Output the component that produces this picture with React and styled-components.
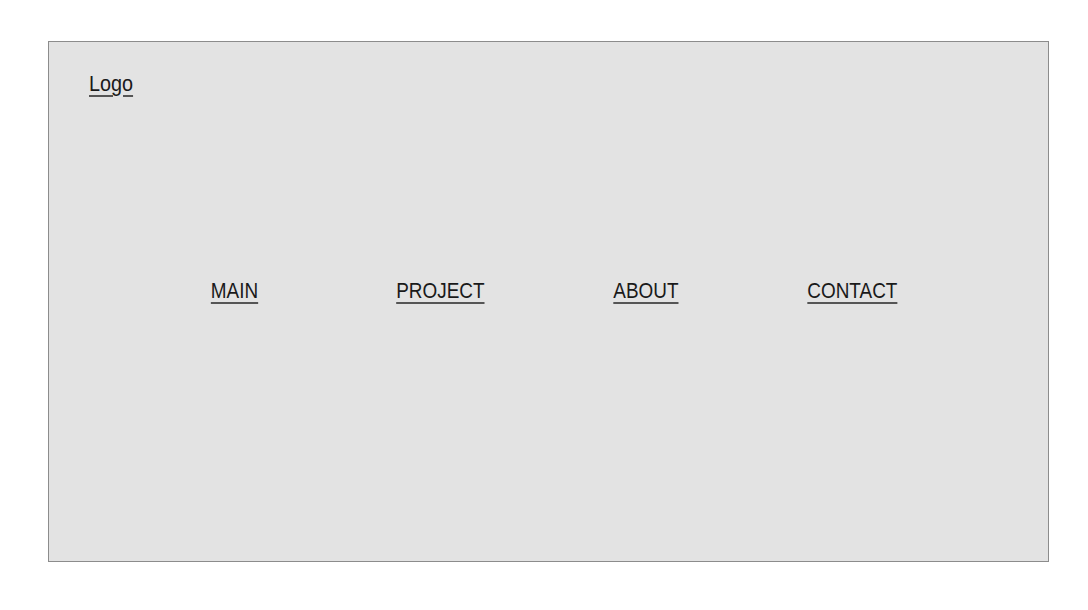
import React from 'react'
import styled, { createGlobalStyle } from 'styled-components'

const GlobalStyle = createGlobalStyle`
  body {
    margin: 0;
    background: #ffffff;
    font-family: "Liberation Sans", Arial, sans-serif;
  }
`

const links = ['MAIN', 'PROJECT', 'ABOUT', 'CONTACT']

function App() {
    return (
        <>
            <GlobalStyle />
            <Page>
                <Frame>
                    <Header>
                        <Logo href="#">Logo</Logo>
                    </Header>
                    <Nav>
                        {links.map((l) => (
                            <NavLink key={l} href="#">{l}</NavLink>
                        ))}
                    </Nav>
                </Frame>
            </Page>
        </>
    )
}

const Page = styled.div`
    padding: 41px 0 0 48px;
`
const Frame = styled.div`
    width: 999px;
    height: 519px;
    border: 1px solid #8c8c8c;
    background-color: #e3e3e3;
    display: flex;
    flex-direction: column;
`
const Header = styled.div`
    padding: 29px 0 0 40px;
`
// the text in the mock uses a narrow grotesque, so squeeze Liberation Sans a bit
const Logo = styled.a`
    display: inline-block;
    font-size: 22px;
    color: #1a1a1a;
    text-decoration: underline;
    text-decoration-color: #555;
    text-underline-offset: 4px;
    transform: scaleX(0.9);
    transform-origin: left center;
`
const Nav = styled.nav`
    margin-top: 181px;
    margin-left: 82px;
    width: 824px;
    display: grid;
    grid-template-columns: repeat(4, 1fr);
    justify-items: center;
`
const NavLink = styled.a`
    display: inline-block;
    font-size: 22px;
    color: #1a1a1a;
    text-decoration: underline;
    text-decoration-color: #555;
    text-underline-offset: 4px;
    transform: scaleX(0.86);
    transform-origin: center;
`

export default App
